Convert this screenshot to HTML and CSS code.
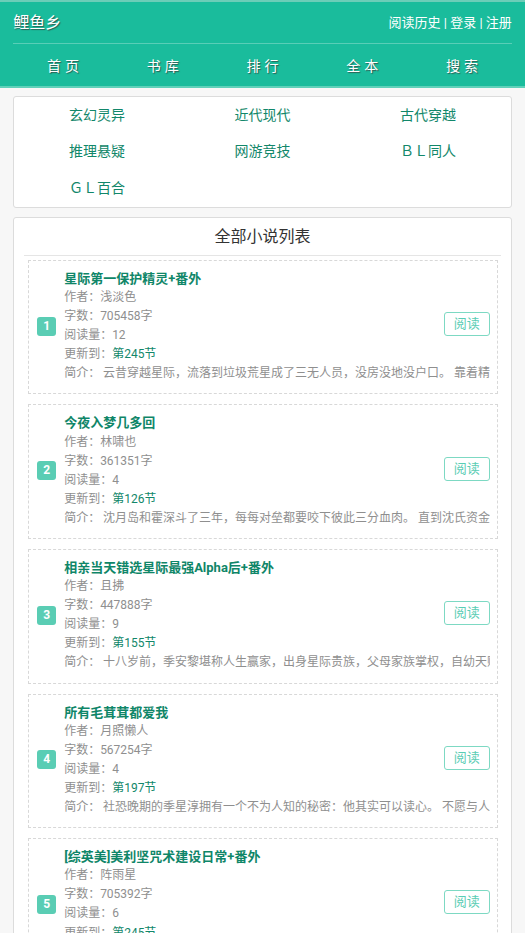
FILE: index.html
```html
<!DOCTYPE html>
<html lang="zh">
<head>
<meta charset="utf-8">
<title>鲤鱼乡 - 全部小说列表</title>
<link rel="stylesheet" href="styles.css">
</head>
<body>
<header class="header">
  <div class="wrap">
    <div class="topbar">
      <a class="logo" href="#">鲤鱼乡</a>
      <div class="userlinks"><a href="#">阅读历史</a> | <a href="#">登录</a> | <a href="#">注册</a></div>
    </div>
    <nav class="nav">
      <a href="#">首页</a>
      <a href="#">书库</a>
      <a href="#">排行</a>
      <a href="#">全本</a>
      <a href="#">搜索</a>
    </nav>
  </div>
</header>

<section class="wrap box cats">
  <a href="#">玄幻灵异</a>
  <a href="#">近代现代</a>
  <a href="#">古代穿越</a>
  <a href="#">推理悬疑</a>
  <a href="#">网游竞技</a>
  <a href="#">ＢＬ同人</a>
  <a href="#">ＧＬ百合</a>
</section>

<section class="wrap box list">
  <h2 class="list-title">全部小说列表</h2>
  <div class="items">
    <div class="item">
      <span class="num">1</span>
      <div class="info">
        <a class="name" href="#">星际第一保护精灵+番外</a>
        <p>作者：浅淡色</p>
        <p>字数：705458字</p>
        <p>阅读量：12</p>
        <p>更新到：<a class="chap" href="#">第245节</a></p>
      </div>
      <p class="intro">简介： 云昔穿越星际，流落到垃圾荒星成了三无人员，没房没地没户口。 靠着精神力修复技能勉强糊口，一不小心捡到了一只小崽子。</p>
      <a class="read" href="#">阅读</a>
    </div>
    <div class="item">
      <span class="num">2</span>
      <div class="info">
        <a class="name" href="#">今夜入梦几多回</a>
        <p>作者：林啸也</p>
        <p>字数：361351字</p>
        <p>阅读量：4</p>
        <p>更新到：<a class="chap" href="#">第126节</a></p>
      </div>
      <p class="intro">简介： 沈月岛和霍深斗了三年，每每对垒都要咬下彼此三分血肉。 直到沈氏资金链断裂，他被逼无奈找上门去。</p>
      <a class="read" href="#">阅读</a>
    </div>
    <div class="item">
      <span class="num">3</span>
      <div class="info">
        <a class="name" href="#">相亲当天错选星际最强Alpha后+番外</a>
        <p>作者：且拂</p>
        <p>字数：447888字</p>
        <p>阅读量：9</p>
        <p>更新到：<a class="chap" href="#">第155节</a></p>
      </div>
      <p class="intro">简介： 十八岁前，季安黎堪称人生赢家，出身星际贵族，父母家族掌权，自幼天赋过人。</p>
      <a class="read" href="#">阅读</a>
    </div>
    <div class="item">
      <span class="num">4</span>
      <div class="info">
        <a class="name" href="#">所有毛茸茸都爱我</a>
        <p>作者：月照懒人</p>
        <p>字数：567254字</p>
        <p>阅读量：4</p>
        <p>更新到：<a class="chap" href="#">第197节</a></p>
      </div>
      <p class="intro">简介： 社恐晚期的季星淳拥有一个不为人知的秘密：他其实可以读心。 不愿与人交流的他只能和毛茸茸们做朋友。</p>
      <a class="read" href="#">阅读</a>
    </div>
    <div class="item">
      <span class="num">5</span>
      <div class="info">
        <a class="name" href="#">[综英美]美利坚咒术建设日常+番外</a>
        <p>作者：阵雨星</p>
        <p>字数：705392字</p>
        <p>阅读量：6</p>
        <p>更新到：<a class="chap" href="#">第245节</a></p>
      </div>
      <p class="intro">简介： 一觉醒来，发现自己穿越到了美利坚，还成为了一名咒术师。</p>
      <a class="read" href="#">阅读</a>
    </div>
  </div>
</section>
</body>
</html>
```

FILE: styles.css
```css
* { box-sizing: border-box; }
html, body { margin: 0; padding: 0; }
body {
  background: #f7f7f7;
  font-family: "Roboto", "Noto Sans CJK SC", sans-serif;
  font-size: 12px;
  color: #8f8f8f;
}
a { text-decoration: none; color: inherit; }
p, h2 { margin: 0; }

.wrap { width: 95%; margin-left: auto; margin-right: auto; }

.header {
  background: #1abc9c;
  border-top: 2px solid #6ccdb8;
  border-bottom: 2px solid #5fd1b9;
  color: #fff;
}
.topbar {
  display: flex;
  justify-content: space-between;
  align-items: center;
  height: 42px;
  padding-bottom: 3px;
  border-bottom: 1px solid rgba(255, 255, 255, 0.28);
}
.logo {
  font-size: 16px;
  color: #fff;
  text-shadow: 1px 1px 1px #2d5d52;
}
.userlinks {
  font-size: 13px;
  color: #fff;
}
.nav {
  display: grid;
  grid-template-columns: repeat(5, 1fr);
  height: 42px;
  align-items: center;
}
.nav a {
  text-align: center;
  font-size: 14px;
  letter-spacing: 4px;
  padding-left: 4px;
  color: #fff;
  text-shadow: 1px 1px 1px #2d5d52;
}

.box {
  background: #fff;
  border: 1px solid #dcdcdc;
  border-radius: 3px;
}

.cats {
  margin-top: 8px;
  display: grid;
  grid-template-columns: repeat(3, 1fr);
  padding: 0 0 1px;
}
.cats a {
  text-align: center;
  font-size: 14px;
  line-height: 36.3px;
  color: #12876a;
}

.list {
  margin-top: 9px;
  padding: 0 10px;
}
.list-title {
  font-size: 16px;
  font-weight: normal;
  color: #333;
  text-align: center;
  line-height: 37px;
  border-bottom: 1px solid #e5e5e5;
}
.items {
  display: flex;
  flex-direction: column;
  gap: 10px;
  padding: 4px 3px 10px 4px;
}
.item {
  display: grid;
  grid-template-columns: 27px 1fr auto;
  grid-template-rows: auto auto;
  border: 1px dashed #d8d8d8;
  padding: 8px 7px 10px 8px;
}
.num {
  grid-row: 1 / 3;
  grid-column: 1;
  align-self: center;
  width: 19px;
  height: 19px;
  line-height: 19px;
  border-radius: 3px;
  background: #5acdb4;
  color: #fff;
  font-weight: bold;
  font-size: 12px;
  text-align: center;
}
.info {
  grid-row: 1;
  grid-column: 2;
  line-height: 19.1px;
  min-width: 0;
}
.name {
  display: block;
  font-size: 13px;
  font-weight: bold;
  color: #0f8668;
  white-space: nowrap;
}
.chap { color: #12876a; }
.intro {
  grid-row: 2;
  grid-column: 2 / 4;
  line-height: 19.1px;
  white-space: nowrap;
  overflow: hidden;
  min-width: 0;
}
.read {
  grid-row: 1 / 3;
  grid-column: 3;
  align-self: center;
  margin-top: -4px;
  display: block;
  width: 46px;
  height: 24px;
  line-height: 22px;
  text-align: center;
  font-size: 13px;
  color: #5acdb4;
  border: 1px solid #7dd9c3;
  border-radius: 3px;
}
```
